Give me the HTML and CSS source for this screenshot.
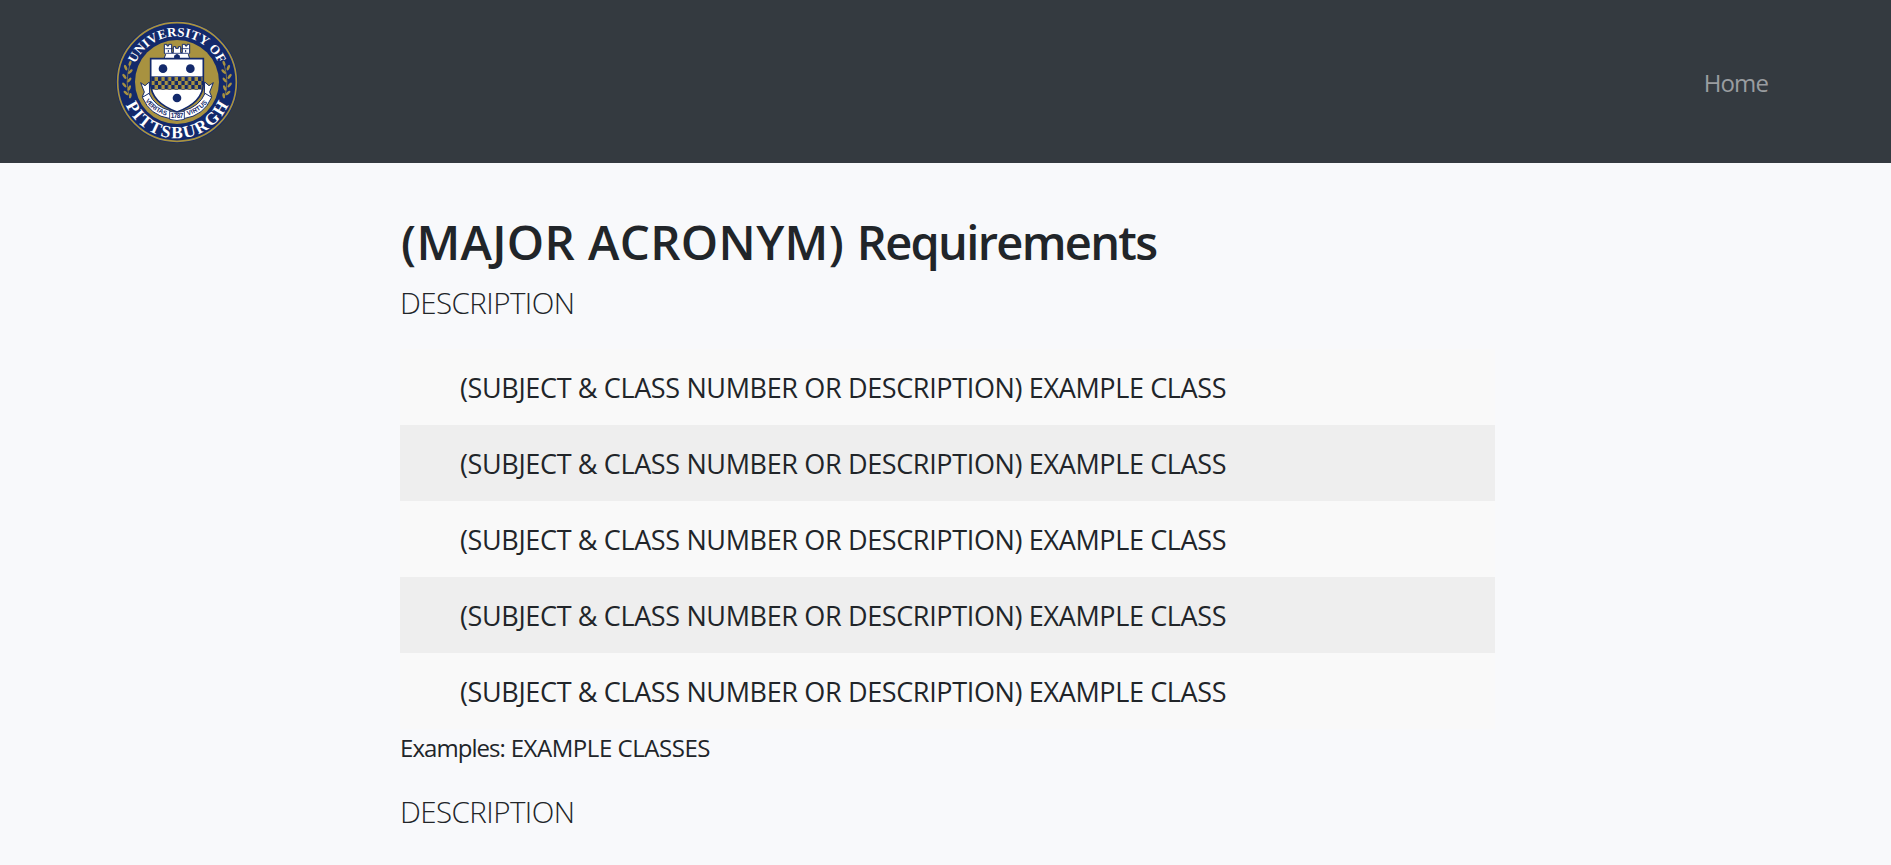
FILE: index.html
```html
<!DOCTYPE html>
<html lang="en">
<head>
<meta charset="utf-8">
<title>Requirements</title>
<link rel="stylesheet" href="styles.css">
</head>
<body>
<header class="navbar">
  <a class="brand" aria-label="University of Pittsburgh">
    <svg class="seal" viewBox="18 18 366 366">
      <defs>
        <path id="arc-top" d="M64 201a137 137 0 0 1 274 0"/>
        <path id="arc-bottom" d="M32 201a169 169 0 0 0 338 0"/>
        <path id="ribbon-left" d="M103 253Q127 292 178 304"/>
        <path id="ribbon-right" d="M224 304Q275 292 299 253"/>
        <pattern id="checks" width="20" height="24" patternUnits="userSpaceOnUse" x="124" y="186">
          <path fill="#a89240" d="M0 0h20v24H0z"/>
          <path fill="#13296b" d="M0 0h10v12H0zM10 12h10v12H10z"/>
        </pattern>
        <clipPath id="shield-clip"><path d="M122 131H280V207Q278 263 201 291Q124 263 122 207z"/></clipPath>
        <g id="laurel">
          <path d="M60 250Q43 203 60 148" fill="none" stroke="#a89240" stroke-width="2"/>
          <g fill="#a89240">
            <ellipse cx="60" cy="145" rx="4" ry="8" transform="rotate(20 60 145)"/>
            <ellipse cx="47" cy="158" rx="4" ry="9" transform="rotate(-25 47 158)"/>
            <ellipse cx="61" cy="170" rx="4" ry="9" transform="rotate(45 61 170)"/>
            <ellipse cx="43" cy="184" rx="4" ry="9" transform="rotate(-35 43 184)"/>
            <ellipse cx="58" cy="195" rx="4" ry="9" transform="rotate(38 58 195)"/>
            <ellipse cx="43" cy="210" rx="4" ry="9" transform="rotate(-40 43 210)"/>
            <ellipse cx="58" cy="219" rx="4" ry="9" transform="rotate(22 58 219)"/>
            <ellipse cx="48" cy="234" rx="4" ry="9" transform="rotate(-50 48 234)"/>
            <ellipse cx="61" cy="242" rx="4" ry="8" transform="rotate(8 61 242)"/>
          </g>
        </g>
        <g id="ribbon">
          <path d="M92 203l13 9 13-11 1 34-9 14-13-4 6-14z"/>
          <path d="M97 247l20-12q17 40 64 52v24Q120 302 97 247z"/>
        </g>
      </defs>
      <circle cx="201" cy="201" r="183" fill="#13296b"/>
      <circle cx="201" cy="201" r="178" fill="none" stroke="#a89240" stroke-width="5"/>
      <circle cx="201" cy="201" r="126" fill="#a89240"/>
      <use href="#laurel"/>
      <use href="#laurel" transform="translate(402 0) scale(-1 1)"/>
      <text class="seal-top"><textPath href="#arc-top" startOffset="50%" text-anchor="middle" textLength="316">UNIVERSITY OF</textPath></text>
      <text class="seal-bottom"><textPath href="#arc-bottom" startOffset="50%" text-anchor="middle" textLength="388">PITTSBURGH</textPath></text>
      <g fill="#fff" stroke="#13296b" stroke-width="3">
        <path d="M162 131l5-13-4-3V88h8v5h5v-5h9v25h5V95h7v5h8v-5h7v18h5V88h9v5h5v-5h8v27l-4 3 4 13z"/>
        <path d="M166 101h22M214 101h22M166 115h70" fill="none" stroke-width="2.500"/>
        <path d="M175 105v7M227 105v7" fill="none"/>
        <path d="M194 131v-9q7-7 14 0v9z" fill="#13296b"/>
        <use href="#ribbon"/>
        <use href="#ribbon" transform="translate(402 0) scale(-1 1)"/>
      </g>
      <path d="M122 131H280V207Q278 263 201 291Q124 263 122 207z" fill="#fff"/>
      <path d="M120 186h162v38H120z" fill="url(#checks)" clip-path="url(#shield-clip)"/>
      <path d="M122 131H280V207Q278 263 201 291Q124 263 122 207z" fill="none" stroke="#13296b" stroke-width="5"/>
      <path d="M123 184.500H279" stroke="#13296b" stroke-width="2"/>
      <g fill="#13296b"><circle cx="159" cy="161" r="13"/><circle cx="241" cy="161" r="13"/><circle cx="201" cy="249" r="13"/></g>
      <path d="M179 289Q201 295 223 289V313Q201 320 179 313z" fill="#fff" stroke="#13296b" stroke-width="2.500"/>
      <text class="motto"><textPath href="#ribbon-left" textLength="79" startOffset="5">VERITAS</textPath></text>
      <text class="motto"><textPath href="#ribbon-right" textLength="73" startOffset="9">VIRTUS</textPath></text>
      <text class="motto" x="201" y="310" text-anchor="middle" textLength="38">1787</text>
    </svg>
  </a>
  <nav><a class="nav-link">Home</a></nav>
</header>
<main class="content">
  <h1 class="title">(MAJOR ACRONYM) <span class="title-word">Requirements</span></h1>
  <p class="lead">DESCRIPTION</p>
  <ul class="classes">
    <li>(SUBJECT &amp; CLASS NUMBER OR DESCRIPTION) EXAMPLE CLASS</li>
    <li>(SUBJECT &amp; CLASS NUMBER OR DESCRIPTION) EXAMPLE CLASS</li>
    <li>(SUBJECT &amp; CLASS NUMBER OR DESCRIPTION) EXAMPLE CLASS</li>
    <li>(SUBJECT &amp; CLASS NUMBER OR DESCRIPTION) EXAMPLE CLASS</li>
    <li>(SUBJECT &amp; CLASS NUMBER OR DESCRIPTION) EXAMPLE CLASS</li>
  </ul>
  <p class="examples"><span class="examples-label">Examples:</span> EXAMPLE CLASSES</p>
  <p class="lead">DESCRIPTION</p>
</main>
</body>
</html>
```
FILE: styles.css
```css
* { box-sizing: border-box; }
body {
  margin: 0;
  height: 865px;
  overflow: hidden;
  background: #f8f9fb;
  color: #212529;
  font-family: "Segoe UI", "Open Sans", sans-serif;
  font-size: 24px;
  line-height: 36px;
}
.navbar {
  display: flex;
  align-items: center;
  justify-content: space-between;
  height: 163px;
  padding: 0 123px 0 116px;
  background: #343a40;
}
.seal { display: block; width: 122px; height: 122px; }
.seal-top, .seal-bottom { fill: #fff; font-family: "Liberation Serif", serif; font-weight: 700; }
.seal-top { font-size: 39px; }
.seal-bottom { font-size: 52px; }
.motto { fill: #13296b; font: 700 19px "Liberation Sans", sans-serif; }
.nav-link { position: relative; top: 1px; color: #9a9da0; letter-spacing: -0.9px; }
.content { width: 1095px; margin: 0 0 0 400px; padding-top: 50px; }
.title {
  margin: 0 0 11px;
  padding-left: 1px;
  font-size: 47.5px;
  font-weight: 580;
  line-height: 58px;
  letter-spacing: 0.35px;
  white-space: nowrap;
}
.title-word { font-size: 47px; letter-spacing: -1.7px; }
.lead { margin: 0; font-size: 29.5px; font-weight: 300; line-height: 42px; letter-spacing: -0.55px; }
.classes { margin: 25px 0 0; padding: 0; list-style: none; background: #f9f9f9; }
.classes li { height: 76px; padding: 21px 60px 19px; font-size: 27px; white-space: nowrap; letter-spacing: -0.36px; }
.classes li:nth-child(even) { background: #eee; }
.examples { margin: 0 0 25px; padding-top: 1px; letter-spacing: -0.45px; }
.examples-label { letter-spacing: -0.95px; }
```
